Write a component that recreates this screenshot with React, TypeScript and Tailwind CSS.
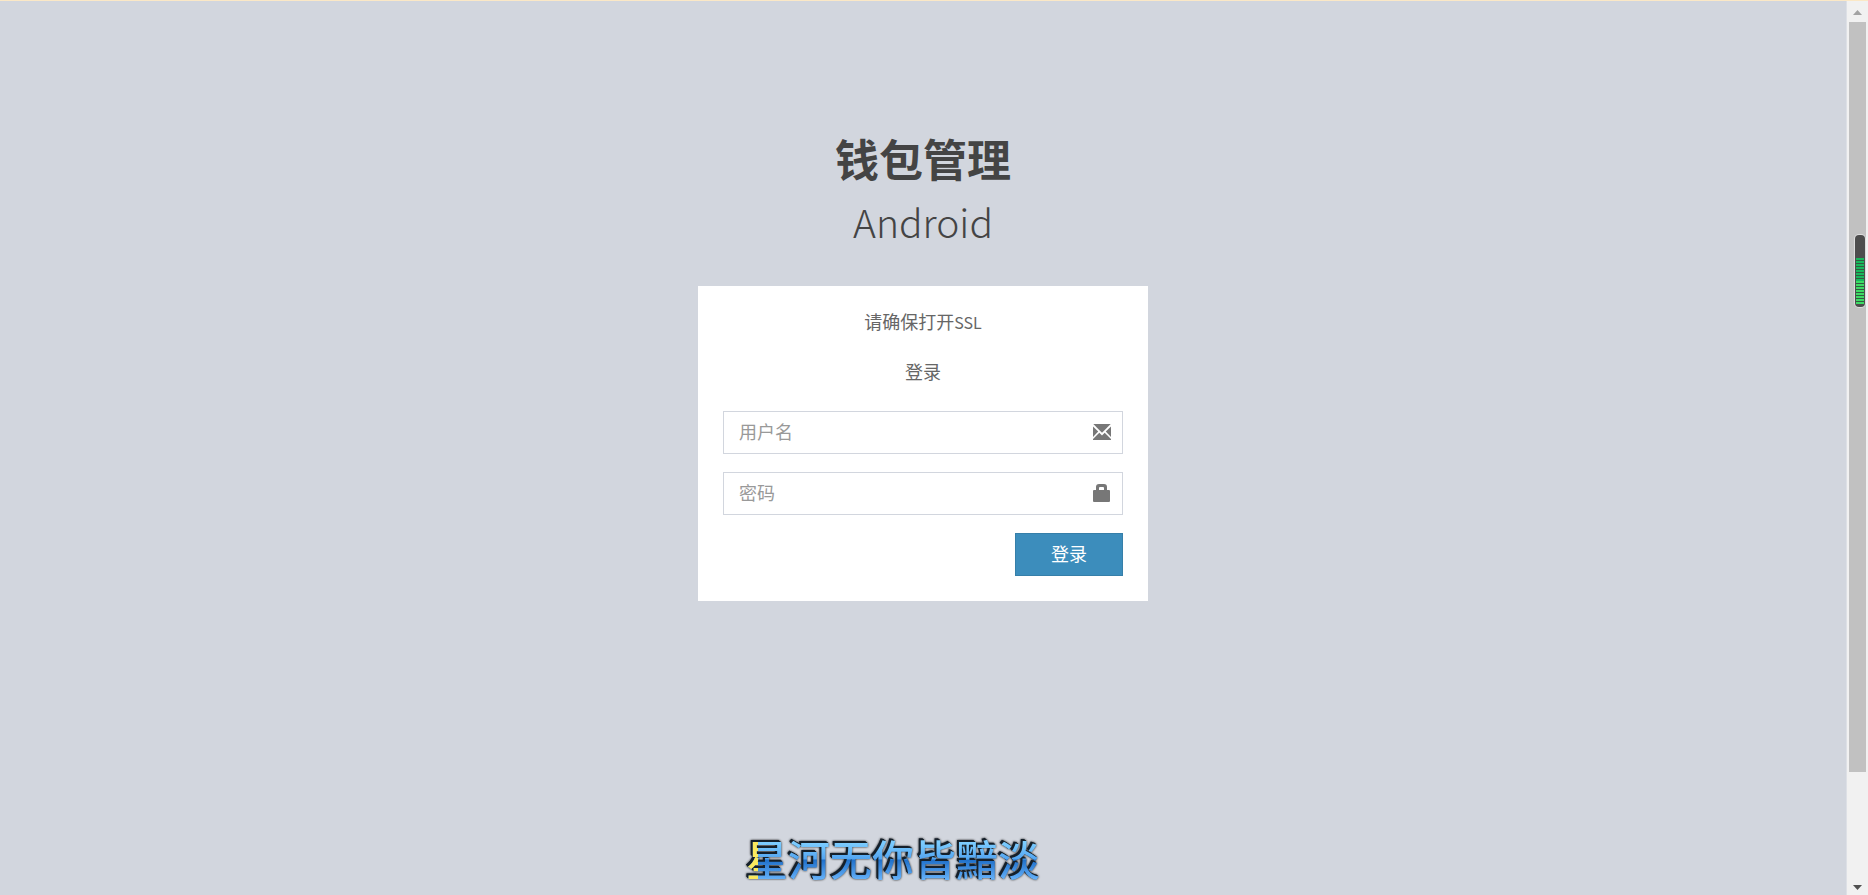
import { useState } from "react";

function EnvelopeIcon() {
  return (
    <svg viewBox="0 0 18 16" className="h-4 w-[18px]" fill="#777777" aria-hidden="true">
      <path d="M0.3 0H17.7L9 8.7Z" />
      <path d="M0 2.4 5.2 7.6 0 13Z" />
      <path d="M18 2.4 12.8 7.6 18 13Z" />
      <path d="M6.3 8.7 9 11.4 11.7 8.7 18 14.9V16H0V14.9Z" />
    </svg>
  );
}

function LockIcon() {
  return (
    <svg viewBox="0 0 18 18" className="size-[18px]" fill="#777777" aria-hidden="true">
      <path
        fillRule="evenodd"
        d="M3 6V3Q3 0 6 0H11Q14 0 14 3V6H16Q17 6 17 7V17Q17 18 16 18H1Q0 18 0 17V7Q0 6 1 6ZM6 6H11V4Q11 3 10 3H7Q6 3 6 4Z"
      />
    </svg>
  );
}

type FieldProps = {
  label: string;
  type: string;
  value: string;
  onChange: (value: string) => void;
  icon: React.ReactNode;
};

function Field({ label, type, value, onChange, icon }: FieldProps) {
  return (
    <div className="relative">
      <input
        type={type}
        value={value}
        placeholder={label}
        aria-label={label}
        onChange={(e) => onChange(e.target.value)}
        className="block h-[43px] w-full border border-[#d2d6de] bg-white pr-12 pb-[3px] pl-[15px] text-lg text-[#555555] outline-none placeholder:text-[#999999] focus:border-[#3c8dbc]"
      />
      <span className="pointer-events-none absolute inset-y-0 right-0 flex w-[42px] items-center justify-center pb-[2px]">
        {icon}
      </span>
    </div>
  );
}

function Scrollbar() {
  return (
    <div
      className="relative flex w-[22px] shrink-0 flex-col items-center border-l border-[#dde0e6] bg-[#f1f1f1]"
      aria-hidden="true"
    >
      <div className="flex h-[21px] w-full items-center justify-center pt-[2px]">
        <svg viewBox="0 0 9 5" className="h-[5px] w-[9px]" fill="#a3a3a3">
          <path d="M4.5 0 9 5H0Z" />
        </svg>
      </div>
      <div className="flex w-full flex-1 justify-center">
        <div className="h-[88%] w-[17px] bg-[#c1c1c1]" />
      </div>
      <div className="flex h-[21px] w-full items-center justify-center pt-[6px]">
        <svg viewBox="0 0 9 5" className="h-[5px] w-[9px]" fill="#505050">
          <path d="M0 0H9L4.5 5Z" />
        </svg>
      </div>
      <div className="absolute top-[234px] right-[3px] flex h-[72px] w-[10px] flex-col overflow-hidden rounded-[4px] bg-[#4d4d4d] px-px pt-[23px] pb-[3px] ring-1 ring-[#dddddd]">
        <div className="flex-1 bg-[repeating-linear-gradient(to_bottom,#18b85c_0px,#18b85c_2px,#315c41_2px,#315c41_3px)]" />
        <div className="flex-1 bg-[repeating-linear-gradient(to_bottom,#3edb65_0px,#3edb65_2px,#315c41_2px,#315c41_3px)]" />
      </div>
    </div>
  );
}

export default function App() {
  const [username, setUsername] = useState("");
  const [password, setPassword] = useState("");

  return (
    <div className="relative flex min-h-screen border-t border-[#fbe8c6] bg-[#d2d6de] font-['Noto_Sans_CJK_SC',sans-serif]">
      <main className="flex flex-1 flex-col items-center pt-[126px]">
        <h1 className="mb-[33px] text-center text-[#444444]">
          <b className="block text-[44px] leading-[63px] font-bold">钱包管理</b>
          <span className="block text-[39px] leading-[63px] font-light">Android</span>
        </h1>
        <section className="w-[450px] max-w-full bg-white px-[25px] pt-[23px] pb-[25px] text-lg leading-[25px] text-[#666666]">
          <p className="mb-[25px] text-center">
            请确保打开<span className="text-base">SSL</span>
          </p>
          <p className="mb-[27px] text-center">登录</p>
          <form className="flex flex-col gap-[18px]" onSubmit={(e) => e.preventDefault()}>
            <Field label="用户名" type="text" value={username} onChange={setUsername} icon={<EnvelopeIcon />} />
            <Field label="密码" type="password" value={password} onChange={setPassword} icon={<LockIcon />} />
            <button
              type="submit"
              className="h-[43px] w-[108px] cursor-pointer self-end border border-[#367fa9] bg-[#3c8dbc] pb-[3px] text-lg text-white hover:bg-[#367fa9]"
            >
              登录
            </button>
          </form>
        </section>
      </main>
      <Scrollbar />
      <div className="pointer-events-none absolute bottom-[7px] left-[746px] drop-shadow-[0_0_1px_#222222]">
        <p className="bg-[linear-gradient(to_right,#fbe95c_12px,transparent_12px),linear-gradient(to_bottom,#7cccff_25%,#52a4f0_52%,#1f6fc9_53%,#64b0f8_85%)] bg-clip-text text-[42px] leading-[60px] font-medium text-transparent [filter:drop-shadow(-1px_-1px_0_#15202b)_drop-shadow(-1px_-1px_0_#15202b)]">
          星河无你皆黯淡
        </p>
      </div>
    </div>
  );
}
